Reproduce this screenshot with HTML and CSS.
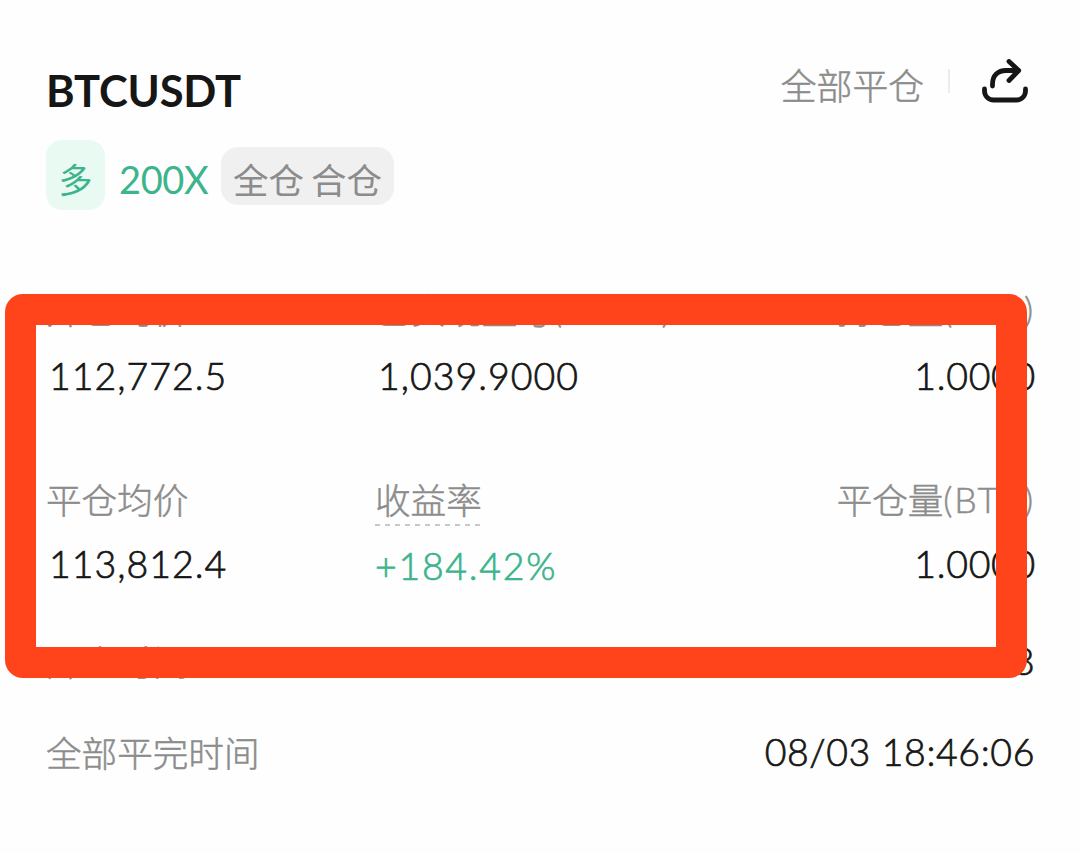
FILE: index.html
```
<!DOCTYPE html>
<html lang="zh-CN">
<head>
    <meta charset="UTF-8">
    <meta name="viewport" content="width=device-width, initial-scale=1.0">
    <title>BTCUSDT</title>
    <link rel="stylesheet" href="styles.css">
</head>
<body>

    <main class="position-card">
        <header class="card-header">
            <h1>BTCUSDT</h1>
            <div class="card-actions">
                <span class="status">全部平仓</span>
                <span class="divider"></span>
                <button class="share-btn" aria-label="分享">
                    <svg width="46" height="44" viewBox="0 0 46 44" fill="none" stroke="#161616" stroke-width="4.8" stroke-linecap="round" stroke-linejoin="round">
                        <path d="M2.500 30v2a9 9 0 0 0 9 9h23a9 9 0 0 0 9-9v-2"/>
                        <path d="M10.500 27v-2c0-8.500 5.500-13.500 13.500-13.500h12"/>
                        <path d="M27 2.500l9.700 9L27 21.500"/>
                    </svg>
                </button>
            </div>
        </header>

        <div class="tags">
            <span class="tag-long">多</span>
            <span class="leverage">200X</span>
            <span class="tag-mode">全仓 合仓</span>
        </div>

        <section class="stats">
            <div class="stat stat-open">
                <span class="label">开仓均价</span>
                <span class="value">112,772.5</span>
            </div>
            <div class="stat stat-open">
                <span class="label">已实现盈亏<span class="unit">(USDT)</span></span>
                <span class="value">1,039.9000</span>
            </div>
            <div class="stat stat-open stat-right">
                <span class="label">持仓量<span class="unit">(BTC)</span></span>
                <span class="value">1.0000</span>
            </div>
            <div class="stat">
                <span class="label">平仓均价</span>
                <span class="value">113,812.4</span>
            </div>
            <div class="stat">
                <span class="label label-dashed">收益率</span>
                <span class="value value-up">+184.42%</span>
            </div>
            <div class="stat stat-right">
                <span class="label">平仓量<span class="unit">(BTC)</span></span>
                <span class="value">1.0000</span>
            </div>
        </section>

        <section class="times">
            <div class="time-row">
                <span class="label">开仓时间</span>
                <span class="value">08/03 18:26:08</span>
            </div>
            <div class="time-row">
                <span class="label">全部平完时间</span>
                <span class="value">08/03 18:46:06</span>
            </div>
        </section>
    </main>

    <!-- Highlight drawn over the stats -->
    <div class="highlight"></div>

</body>
</html>
```

FILE: styles.css
```
* {
    margin: 0;
    padding: 0;
    box-sizing: border-box;
}

body {
    position: relative;
    height: 853px;
    overflow: hidden;
    background-color: #fefefe;
    color: #161616;
    font-family: Lato, "Noto Sans CJK SC", sans-serif;
}

.position-card {
    padding: 56px 46px 0 46px;
}

.card-header {
    display: flex;
    justify-content: space-between;
    height: 68px;
}

h1 {
    font-size: 43.5px;
    font-weight: 700;
    line-height: 68px;
    letter-spacing: -0.2px;
}

.card-actions {
    display: flex;
    align-items: center;
    height: 50px;
    margin-right: 6px;
}

.status {
    margin-top: 11px;
    color: #8c8c8c;
    font-size: 35.8px;
    font-weight: 300;
    line-height: 50px;
    -webkit-text-stroke: 0.5px #8c8c8c;
}

.divider {
    width: 2px;
    height: 24px;
    margin: 0 32px 0 24px;
    background-color: #ececec;
}

.share-btn {
    height: 44px;
    border: none;
    background: none;
    cursor: pointer;
}

.tags {
    display: flex;
    align-items: center;
    height: 70px;
    margin-top: 16px;
}

.tag-long {
    width: 59px;
    height: 70px;
    border-radius: 16px;
    background-color: #e9faf3;
    color: #3cb48c;
    font-size: 34px;
    line-height: 79px;
    text-align: center;
}

.leverage {
    width: 90px;
    margin: 7px 12px 0 14px;
    color: #3cb48c;
    font-size: 38px;
    line-height: 78px;
    letter-spacing: -0.4px;
    white-space: nowrap;
}

.tag-mode {
    width: 173px;
    height: 58px;
    margin-top: 2px;
    border-radius: 17px;
    background-color: #f0f0f0;
    color: #8c8c8c;
    font-size: 35.5px;
    line-height: 68px;
    text-align: center;
    word-spacing: -2px;
    white-space: nowrap;
}

.stats {
    display: grid;
    grid-template-columns: 329px 329px 330px;
    grid-auto-rows: 188px;
    margin-top: 80px;
}

.stat {
    display: flex;
    flex-direction: column;
    align-items: flex-start;
}

.stat-right {
    align-items: flex-end;
}

.label {
    color: #8c8c8c;
    font-size: 35.6px;
    font-weight: 300;
    line-height: 46px;
    white-space: nowrap;
    -webkit-text-stroke: 0.5px #8c8c8c;
}

.stat-open .label {
    margin: -2px 0 2px;
}

.unit {
    margin-right: -1px;
    line-height: 1;
    letter-spacing: 1.7px;
    vertical-align: 1px;
}

.value {
    margin-top: 17px;
    padding-left: 3px;
    font-size: 37.5px;
    font-weight: 300;
    line-height: 46px;
    letter-spacing: 1px;
    white-space: nowrap;
    -webkit-text-stroke: 0.7px currentColor;
}

.stat-right .value {
    margin-right: -2px;
    letter-spacing: 0.7px;
}

.label-dashed {
    height: 48px;
    background: repeating-linear-gradient(90deg, #c8c8c8 0 5px, transparent 5px 10px) left bottom / 100% 2px no-repeat;
}

.value-up {
    padding-left: 0;
    color: #3cb48c;
    letter-spacing: 1.7px;
}

.times {
    display: flex;
    flex-direction: column;
    margin-top: -51px;
}

.time-row {
    display: flex;
    justify-content: space-between;
    align-items: center;
    height: 91px;
}

.time-row .label {
    padding-top: 5px;
}

.time-row .value {
    margin-top: 0;
    margin-right: -1px;
    letter-spacing: 0.6px;
}

.highlight {
    position: absolute;
    top: 294px;
    left: 5px;
    width: 1022px;
    height: 384px;
    border: 31px solid #ff431b;
    border-radius: 18px;
}
```
